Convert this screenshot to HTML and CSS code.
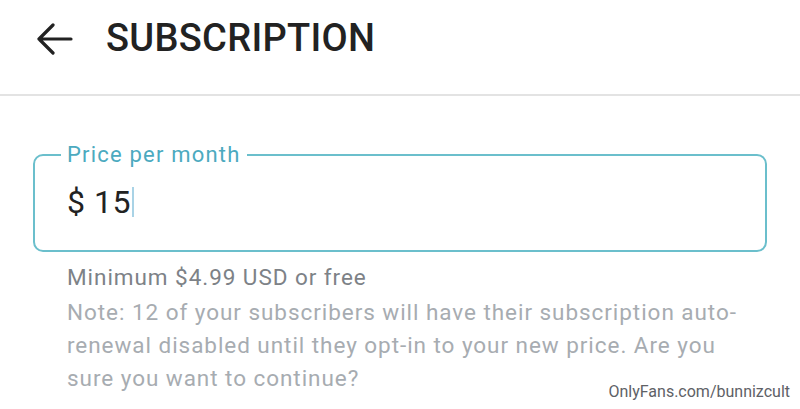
FILE: index.html
```html
<!DOCTYPE html>
<html lang="en">
<head>
    <meta charset="UTF-8">
    <meta name="viewport" content="width=device-width, initial-scale=1.0">
    <title>Subscription</title>
    <link rel="stylesheet" href="styles.css">
</head>
<body>
    <header class="top-bar">
        <button class="back-btn" aria-label="Back">
            <svg width="36" height="32" viewBox="0 0 36 32">
                <path d="M2 16 H34 M16 2 L2 16 L16 30" fill="none" stroke="#222" stroke-width="3.2" stroke-linecap="round" stroke-linejoin="round"/>
            </svg>
        </button>
        <h1>SUBSCRIPTION</h1>
    </header>

    <main class="content">
        <fieldset class="price-field">
            <legend>Price per month</legend>
            <div class="price-value">$ 15<span class="caret"></span></div>
        </fieldset>

        <p class="hint">Minimum $4.99 USD or free</p>
        <p class="note">Note: 12 of your subscribers will have their subscription auto-renewal disabled until they opt-in to your new price. Are you sure you want to continue?</p>
    </main>

    <div class="watermark">OnlyFans.com/bunnizcult</div>
</body>
</html>
```

FILE: styles.css
```css
body {
    margin: 0;
    font-family: Roboto, "Noto Sans", Arial, sans-serif;
    background-color: #fff;
    color: #222;
    height: 409px;
    overflow: hidden;
    position: relative;
}
.top-bar {
    display: flex;
    align-items: center;
    height: 96px;
    padding-left: 37px;
    padding-bottom: 18px;
    border-bottom: 2px solid #e3e3e3;
    box-sizing: border-box;
}
.back-btn {
    background: none;
    border: none;
    padding: 0;
    display: flex;
    margin-right: 33px;
    margin-top: 2px;
}
h1 {
    margin: 0;
    font-size: 38px;
    font-weight: 500;
    letter-spacing: 0.3px;
    color: #222;
}
.content {
    padding: 0 33px;
}
.price-field {
    margin: 48px 0 0;
    border: 2px solid #6bbfcc;
    border-radius: 10px;
    padding: 0 32px;
    height: 108px;
    box-sizing: border-box;
}
.price-field legend {
    margin-left: -6px;
    padding: 0 6px;
    font-size: 22px;
    line-height: 22px;
    letter-spacing: 1.2px;
    color: #4caabf;
}
.price-value {
    font-size: 32px;
    line-height: 36px;
    margin-top: 18px;
    display: flex;
    align-items: center;
    letter-spacing: 0.5px;
}
.caret {
    display: inline-block;
    width: 2px;
    height: 30px;
    background-color: #a9d3e6;
    margin-left: 1px;
}
.hint {
    margin: 9px 0 0 34px;
    font-size: 22.5px;
    line-height: 32px;
    letter-spacing: 0.95px;
    color: #7d8287;
}
.note {
    margin: 3px 0 0 34px;
    width: 675px;
    font-size: 22.5px;
    line-height: 33px;
    letter-spacing: 0.95px;
    color: #a7acb1;
}
.watermark {
    position: absolute;
    right: 10px;
    bottom: 8px;
    font-size: 16px;
    color: #5e6166;
}
```
